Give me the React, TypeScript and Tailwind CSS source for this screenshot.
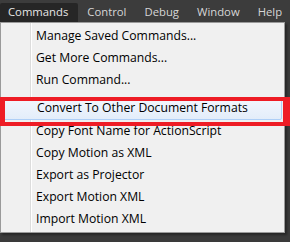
const menus = ['Commands', 'Control', 'Debug', 'Window', 'Help']

const topItems = ['Manage Saved Commands...', 'Get More Commands...', 'Run Command...']
const bottomItems = [
  'Copy Font Name for ActionScript',
  'Copy Motion as XML',
  'Export as Projector',
  'Export Motion XML',
  'Import Motion XML',
]

function Item({ label }: { label: string }) {
  return <div className="h-[22px] flex items-center pl-[35px] text-[12.2px] text-black">{label}</div>
}

export default function App() {
  return (
    <div
      className="relative w-[290px] h-[242px] overflow-hidden bg-[#3a3a3a]"
      style={{ fontFamily: '"Open Sans", "Noto Sans", sans-serif' }}
    >
      {/* menubar */}
      <div className="flex h-[22px] items-end text-[11.3px] text-[#d6d6d6] bg-[#3c3c3c]">
        {menus.map((m, i) => (
          <div
            key={m}
            className={
              i === 0
                ? 'h-[19px] flex items-center pl-[8px] pr-[10px] bg-[#262626] text-[#e6e6e6] rounded-t-[2px]'
                : 'h-[19px] flex items-center px-[9px]'
            }
          >
            {m}
          </div>
        ))}
      </div>

      {/* dropdown menu */}
      <div className="absolute top-[22px] left-0 w-[285px] h-[211px] flex flex-col pt-[2px] border border-[#9a9a9a] shadow-[2px_2px_2px_rgba(0,0,0,0.35)] bg-[linear-gradient(to_right,#f0f0f0_29px,#dcdcdc_29px,#dcdcdc_30px,#ffffff_30px,#ffffff_31px,#f0f0f0_31px)]">
        {topItems.map((t) => (
          <Item key={t} label={t} />
        ))}
        <div className="h-[6px]" />
        <div className="h-[23px] mx-[2px] flex items-center pl-[33px] text-[12.2px] text-black bg-gradient-to-b from-[#f3f7fd] to-[#e3edfa] border border-[#aecff7] rounded-[2px]">
          Convert To Other Document Formats
        </div>
        {bottomItems.map((t) => (
          <Item key={t} label={t} />
        ))}
      </div>

      {/* red annotation box */}
      <div className="absolute top-[97px] left-0 w-[290px] h-[29px] border-y-[4px] border-l-[5px] border-r-[7px] border-[#ee1c25]" />
    </div>
  )
}
